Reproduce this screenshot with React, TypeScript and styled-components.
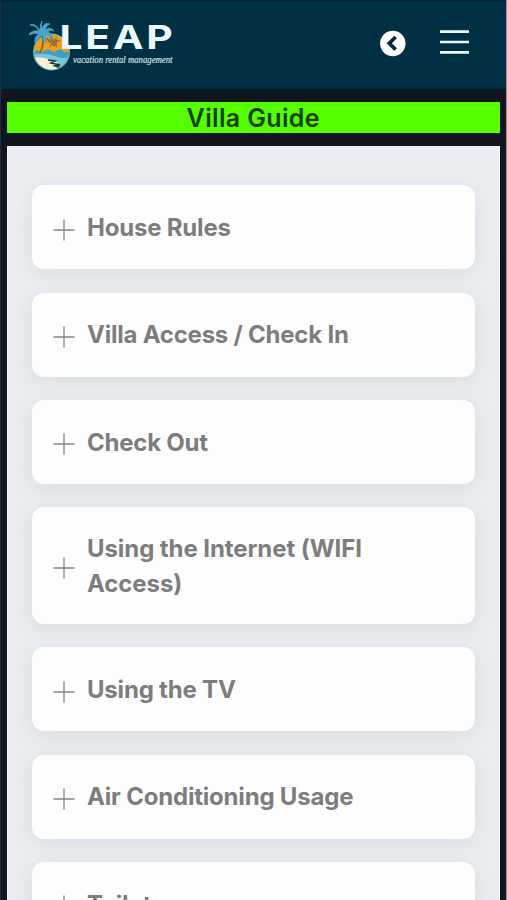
import React from "react";
import styled, { createGlobalStyle } from "styled-components";

const GlobalStyle = createGlobalStyle`
  * { box-sizing: border-box; }
  html, body { margin: 0; padding: 0; overflow: hidden; background: #10151e; }
`;

const Screen = styled.div`
  width: 507px;
  height: 900px;
  overflow: hidden;
  display: flex;
  flex-direction: column;
  background: #10151e;
  border-left: 1px solid #1b2f40;
  border-right: 1px solid #8b959f;
  font-family: Inter, "Liberation Sans", sans-serif;
`;

const Header = styled.header`
  flex: none;
  height: 89px;
  display: flex;
  align-items: center;
  justify-content: space-between;
  padding: 0 37px 5px 27px;
  background: #003044;
  border-top: 2px solid #00243c;
`;

const Actions = styled.div`
  display: flex;
  align-items: center;
  gap: 34px;
`;

const IconButton = styled.button<{ $lift?: number }>`
  display: flex;
  padding: 0 0 ${(p) => p.$lift ?? 0}px;
  border: 0;
  background: none;
`;

const Body = styled.main`
  flex: 1;
  min-height: 0;
  display: flex;
  flex-direction: column;
  gap: 13px;
  padding: 13.4px 6.5px 0 6px;
`;

const Title = styled.h1`
  flex: none;
  margin: 0;
  height: 31px;
  line-height: 32px;
  text-align: center;
  font-size: 25px;
  font-weight: 600;
  letter-spacing: 0.35px;
  color: #174010;
  background: #55ff00;
`;

const Panel = styled.section`
  flex: 1;
  min-height: 0;
  overflow: hidden;
  display: flex;
  flex-direction: column;
  gap: 23.2px;
  padding: 38.1px 23.5px 0 23.5px;
  background: linear-gradient(180deg, #eaedf2, #e8ecf0 160px);
  border-left: 1px solid #f4f7fd;
  border-right: 1px solid #f4f7fd;
  border-top: 1px solid #f1f2f5;
`;

const Card = styled.button`
  flex: none;
  display: flex;
  align-items: center;
  gap: 12.5px;
  width: 100%;
  min-height: 84px;
  padding: 25px 21px 23px 21px;
  border: 0;
  border-radius: 12px;
  background: #fdfdfe;
  box-shadow: 0 4px 18px rgba(75, 90, 80, 0.09);
  text-align: left;
  font-family: inherit;
  color: #7d7d7e;
`;

const PlusIcon = styled.svg`
  flex: none;
  width: 22px;
  height: 22px;
  margin-top: 3px;
`;

const Label = styled.span<{ $spacing: number }>`
  width: 310px;
  font-size: 24px;
  font-weight: 700;
  line-height: 34.6px;
  letter-spacing: ${(p) => p.$spacing}px;
`;

const sections = [
  { title: "House Rules", spacing: -0.2 },
  { title: "Villa Access / Check In", spacing: -0.23 },
  { title: "Check Out", spacing: -0.23 },
  { title: "Using the Internet (WIFI Access)", spacing: -0.08 },
  { title: "Using the TV", spacing: -0.2 },
  { title: "Air Conditioning Usage", spacing: -0.2 },
  { title: "Toilets", spacing: -0.1 },
];

function Logo() {
  return (
    <svg width="150" height="60" viewBox="28 13 150 60">
      <defs>
        <clipPath id="badge">
          <circle cx="51.5" cy="52" r="17.5" />
        </clipPath>
      </defs>
      <circle cx="51.5" cy="52" r="18.5" fill="#5eb9d5" />
      <g clipPath="url(#badge)">
        <rect x="32" y="30" width="40" height="40" fill="#f59c18" />
        <path d="M32 54l5-4 5 2 6-3 6 3 6-3 5 3 7-1v20H32z" fill="#459dbd" />
        <path d="M32 55q12-3 22 1t18 0v14H32z" fill="#75c8dc" />
        <path d="M33 58q10-2 17 2l8 2-4 3 8 3q-12 5-22-1-6-4-7-9z" fill="#f7efcf" />
        <path d="M48 60l7 1-4 2 9 2-5 1 6 2" fill="none" stroke="#173b46" strokeWidth="1.6" />
      </g>
      <path d="M42 35q3 8-2 18M44 36l11 10" fill="none" stroke="#69663c" strokeWidth="1.6" />
      <path
        d="M42 33Q35 22 30 25q6 0 9 6-8-1-10 4 5-3 10-1-5 3-4 9 3-6 8-8 0 5 3 8 1-5-1-8 5 0 8 5 0-7-6-8 4-3 7-1-3-5-9-1 1-5 5-6-6-2-8 5-1-5 0-8-3 5-1 12z"
        fill="#4ba5c8"
        stroke="#4ba5c8"
        strokeWidth="0.8"
      />
      <path d="M54 40l-5-3 2 4-5 1 5 1-2 5 5-5 3 5v-6l4-1-5-2 2-4z" fill="#8d7540" />
      <text
        x="59.5"
        y="49"
        textLength="116"
        lengthAdjust="spacingAndGlyphs"
        fontFamily="Inter, sans-serif"
        fontSize="32.5"
        fontWeight="700"
        letterSpacing="2.2"
        fill="#ecfbff"
      >
        LEAP
      </text>
      <text
        x="73"
        y="63.2"
        textLength="99.5"
        lengthAdjust="spacingAndGlyphs"
        fontFamily="Liberation Serif, serif"
        fontStyle="italic"
        fontSize="10.5"
        fill="#d5e0e4"
        stroke="#d5e0e4"
        strokeWidth="0.2"
      >
        vacation rental management
      </text>
    </svg>
  );
}

export default function App() {
  return (
    <>
      <GlobalStyle />
      <Screen>
        <Header>
          <Logo />
          <Actions>
            <IconButton aria-label="Back">
              <svg width="27" height="27" viewBox="0 0 27 27">
                <circle cx="13.8" cy="13.5" r="12.7" fill="#fff" />
                <path d="M16.6 7l-6.3 6.3 6.3 6.3" fill="none" stroke="#082b3c" strokeWidth="3.7" />
              </svg>
            </IconButton>
            <IconButton aria-label="Menu" $lift={2}>
              <svg width="29" height="26" viewBox="0 0 29 26">
                <path d="M0 2.7h29M0 13h29M0 23.3h29" stroke="#edf8fb" strokeWidth="2.7" />
              </svg>
            </IconButton>
          </Actions>
        </Header>
        <Body>
          <Title>Villa Guide</Title>
          <Panel>
            {sections.map((s) => (
              <Card key={s.title}>
                <PlusIcon viewBox="0 0 22 22">
                  <path d="M0.5 11h21M11 0.5v21" stroke="#858585" strokeWidth="1.3" />
                </PlusIcon>
                <Label $spacing={s.spacing}>{s.title}</Label>
              </Card>
            ))}
          </Panel>
        </Body>
      </Screen>
    </>
  );
}
